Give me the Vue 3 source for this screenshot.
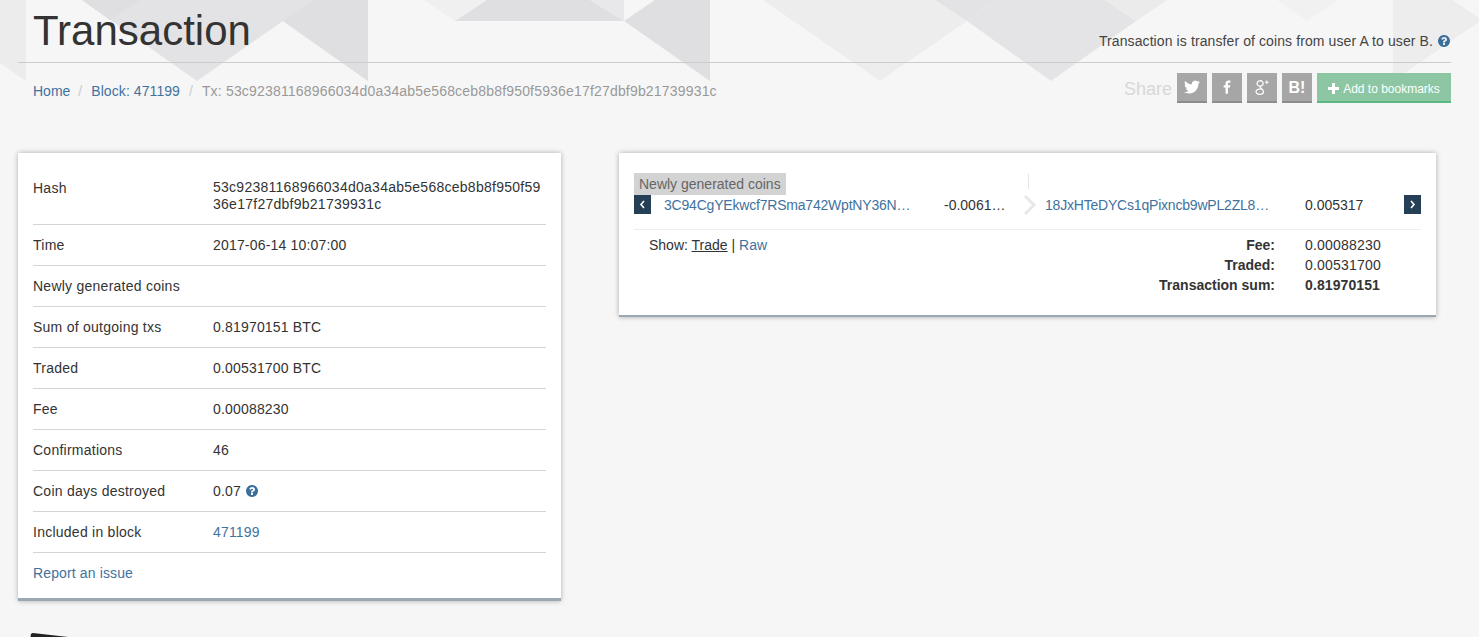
<script setup>
const rows = [
  { label: 'Time', value: '2017-06-14 10:07:00' },
  { label: 'Newly generated coins', value: '' },
  { label: 'Sum of outgoing txs', value: '0.81970151 BTC' },
  { label: 'Traded', value: '0.00531700 BTC' },
  { label: 'Fee', value: '0.00088230' },
  { label: 'Confirmations', value: '46' },
  { label: 'Coin days destroyed', value: '0.07', help: true },
  { label: 'Included in block', value: '471199', link: true }
]
const totals = [
  { label: 'Fee:', value: '0.00088230' },
  { label: 'Traded:', value: '0.00531700' },
  { label: 'Transaction sum:', value: '0.81970151', strong: true }
]
const helpPath = 'M1024 1376v-192q0-14-9-23t-23-9h-192q-14 0-23 9t-9 23v192q0 14 9 23t23 9h192q14 0 23-9t9-23zm256-672q0-88-55.5-163t-138.5-116-170-41q-243 0-371 213-15 24 8 42l132 100q7 6 19 6 16 0 25-12 53-68 86-92 34-24 86-24 48 0 85.5 26t37.5 59q0 38-20 61t-68 45q-63 28-115.5 86.5t-52.5 125.5v36q0 14 9 23t23 9h192q14 0 23-9t9-23q0-19 21.5-49.5t54.5-49.5q32-18 49-28.5t46-35 44.5-48 28-60.5 12.5-81zm384 192q0 209-103 385.5t-279.5 279.5-385.5 103-385.5-103-279.5-279.5-103-385.5 103-385.5 279.5-279.5 385.5-103 385.5 103 279.5 279.5 103 385.5z'
</script>

<template>
  <div class="page">
    <svg class="pattern" width="1479" height="81" viewBox="0 0 1479 81" aria-hidden="true">
      <polygon points="0,0 26,0 26,81 0,63" fill="#ececec" />
      <polygon points="82,0 197,81 283,21 368,81 368,0" fill="#e3e3e5" />
      <polygon points="82,0 110,20 140,0" fill="#dfdfe1" />
      <polygon points="283,21 315,0 368,0 368,81" fill="#dfdfe1" />
      <polygon points="424,0 455,21 487,0" fill="#f0f0f0" />
      <polygon points="455,21 487,0 590,0 624,21" fill="#dfdfe1" />
      <polygon points="590,0 624,0 624,21" fill="#e8e8ea" />
      <polygon points="624,21 655,0 710,0 710,81" fill="#dfdfe1" />
      <polygon points="763,0 880,81 967,21 935,0" fill="#ededed" />
      <polygon points="935,0 967,21 995,0" fill="#e3e3e5" />
      <polygon points="995,0 967,21 1051,81 1136,21 1105,0" fill="#e4e4e6" />
      <polygon points="1105,0 1136,21 1167,0" fill="#ebebec" />
      <polygon points="1277,0 1307,21 1338,0" fill="#f1f1f1" />
      <polygon points="1393,0 1453,0 1482,20 1393,81" fill="#ededed" />
    </svg>

    <header class="header">
      <div class="title-row">
        <h1 class="title">Transaction</h1>
        <p class="desc">
          Transaction is transfer of coins from user A to user B.
          <svg class="help" viewBox="0 0 1792 1792"><path :d="helpPath" /></svg>
        </p>
      </div>
      <div class="sub-row">
        <nav class="crumbs">
          <a class="link">Home</a><span class="sep">/</span>
          <a class="link block-link">Block: 471199</a><span class="sep">/</span>
          <span class="current">Tx: 53c92381168966034d0a34ab5e568ceb8b8f950f5936e17f27dbf9b21739931c</span>
        </nav>
        <div class="share">
          <span class="share-label">Share</span>
          <a class="sbtn">
            <svg width="16" height="16" viewBox="0 0 24 24" fill="#fff"><path d="M23.953 4.57a10 10 0 01-2.825.775 4.958 4.958 0 002.163-2.723c-.951.555-2.005.959-3.127 1.184a4.92 4.92 0 00-8.384 4.482C7.69 8.095 4.067 6.13 1.64 3.162a4.822 4.822 0 00-.666 2.475c0 1.71.87 3.213 2.188 4.096a4.904 4.904 0 01-2.228-.616v.06a4.923 4.923 0 003.946 4.827 4.996 4.996 0 01-2.212.085 4.936 4.936 0 004.604 3.417 9.867 9.867 0 01-6.102 2.105c-.39 0-.779-.023-1.17-.067a13.995 13.995 0 007.557 2.209c9.053 0 13.998-7.496 13.998-13.985 0-.21 0-.42-.015-.63A9.935 9.935 0 0024 4.59z" /></svg>
          </a>
          <a class="sbtn">
            <svg width="8" height="14" viewBox="0 0 10 17" fill="#fff"><path d="M9.2 3.1H7.6c-1.2 0-1.4.6-1.4 1.400V6.200h2.900l-.4 2.800H6.200v8H3.200V9H.8V6.200h2.400V4.100C3.200 1.700 4.700.3 6.900.3c1 0 1.900.1 2.300.1z" /></svg>
          </a>
          <a class="sbtn">
            <svg width="19" height="19" viewBox="0 0 20 20" fill="none" stroke="#fff" stroke-width="1.300"><path d="M9.300 2.800c-3-.5-5 .9-5 3 0 1.900 1.700 3.100 3.600 2.800 2-.3 3.200-1.900 2.700-3.600-.3-1.200-1.300-2-2.500-2.100" /><path d="M8 8.700c-.9 1-.3 1.500.8 2.400 1.400 1.100 2.500 1.900 2.300 3.500-.2 1.700-2 2.700-4.200 2.600-2.300-.1-3.900-1.300-3.700-2.900.2-1.600 2.200-2.700 5.300-2.800" /><path d="M14.500 2.500v4M12.500 4.500h4" stroke-width="1" /></svg>
          </a>
          <a class="sbtn hatena">B!</a>
          <a class="bookmark">
            <svg width="11" height="11" viewBox="0 0 11 11" fill="#fff"><path d="M4 0h3v4h4v3H7v4H4V7H0V4h4z" /></svg>
            Add to bookmarks
          </a>
        </div>
      </div>
    </header>

    <main class="content">
      <section class="card info">
        <div class="row hash-row">
          <span class="label">Hash</span>
          <span class="hash">53c92381168966034d0a34ab5e568ceb8b8f950f5936e17f27dbf9b21739931c</span>
        </div>
        <div v-for="r in rows" :key="r.label" class="row">
          <span class="label">{{ r.label }}</span>
          <span class="value">
            <a v-if="r.link" class="link">{{ r.value }}</a>
            <template v-else>{{ r.value }}</template>
            <svg v-if="r.help" class="help" viewBox="0 0 1792 1792"><path :d="helpPath" /></svg>
          </span>
        </div>
        <a class="link report">Report an issue</a>
      </section>

      <section class="card tx">
        <div class="tx-head">
          <div class="tx-head-left"><span class="tag">Newly generated coins</span></div>
          <div class="tx-head-right"></div>
        </div>
        <div class="tx-line">
          <button class="nav-btn">
            <svg width="7" height="9" viewBox="0 0 7 9" fill="none" stroke="#fff" stroke-width="1.600"><path d="M5 1 2 4.500 5 8" /></svg>
          </button>
          <a class="link addr addr-from">3C94CgYEkwcf7RSma742WptNY36NpUnGrH</a>
          <span class="amount amount-from">-0.00619930</span>
          <svg class="arrow" width="13" height="20" viewBox="0 0 13 20" fill="none" stroke="#e8e8e8" stroke-width="3"><path d="M2 1l9 9-9 9" /></svg>
          <a class="link addr addr-to">18JxHTeDYCs1qPixncb9wPL2ZL8nPaqFqJ</a>
          <span class="amount amount-to">0.005317</span>
          <button class="nav-btn">
            <svg width="7" height="9" viewBox="0 0 7 9" fill="none" stroke="#fff" stroke-width="1.600"><path d="M2 1l3 3.500L2 8" /></svg>
          </button>
        </div>
        <div class="tx-foot">
          <div class="show">Show: <a class="active">Trade</a> | <a class="link">Raw</a></div>
          <div class="totals">
            <div v-for="t in totals" :key="t.label" class="total" :class="{ strong: t.strong }">
              <span class="total-label">{{ t.label }}</span>
              <span class="total-value">{{ t.value }}</span>
            </div>
          </div>
        </div>
      </section>
    </main>

    <svg class="peek" width="50" height="5" viewBox="0 0 50 5" aria-hidden="true"><path d="M1 5C0 2 1 0 3 0l44 5z" fill="#222" /></svg>
  </div>
</template>

<style scoped>
.page {
  position: relative;
  width: 1479px;
  height: 637px;
  overflow: hidden;
  font-family: "Liberation Sans", Arial, sans-serif;
  font-size: 14px;
  line-height: 20px;
  color: #333;
}
.pattern {
  position: absolute;
  top: 0;
  left: 0;
}
.header {
  position: relative;
  padding: 0 28px 0 18px;
}
.title-row {
  display: flex;
  justify-content: space-between;
  align-items: flex-end;
  height: 62px;
  border-bottom: 1px solid #ccc;
  padding-left: 15px;
}
.title {
  margin: 0;
  font-size: 42px;
  font-weight: 400;
  line-height: 62px;
  color: #333;
}
.desc {
  margin: 0 0 11px;
  display: flex;
  align-items: center;
  gap: 4px;
  font-size: 14px;
  letter-spacing: 0.1px;
  color: #444;
}
.help {
  width: 14px;
  height: 14px;
  fill: #3a6f9c;
  flex: none;
}
.sub-row {
  display: flex;
  justify-content: space-between;
  padding: 10px 0 0 15px;
}
.crumbs {
  padding-top: 8px;
}
.link {
  color: #3f729e;
  text-decoration: none;
}
.block-link {
  letter-spacing: 0.08px;
}
.sep {
  color: #ccc;
  padding: 0 9px 0 8px;
}
.block-link + .sep {
  padding: 0 9px;
}
.current {
  color: #999;
  letter-spacing: 0.18px;
}
.share {
  display: flex;
  gap: 5px;
  align-items: stretch;
  height: 30px;
}
.share-label {
  font-size: 18px;
  line-height: 32px;
  color: #d8d8d8;
}
.sbtn {
  width: 30px;
  box-sizing: border-box;
  display: flex;
  align-items: center;
  justify-content: center;
  background: #a6a6a6;
  border-bottom: 2px solid #8c8c8c;
  color: #fff;
}
.hatena {
  font-size: 16px;
  line-height: 18px;
  padding-top: 1px;
  font-weight: 700;
}
.bookmark {
  width: 134px;
  box-sizing: border-box;
  display: flex;
  align-items: center;
  justify-content: center;
  gap: 4px;
  padding-top: 3px;
  background: #8cc6a3;
  border-bottom: 2px solid #5cb882;
  color: #fff;
  font-size: 12px;
}
.content {
  display: flex;
  align-items: flex-start;
  gap: 58px;
  padding: 50px 0 0 18px;
}
.card {
  box-sizing: border-box;
  background: #fff;
  border-bottom: 3px solid #9aa8b4;
  box-shadow: 0 0 5px rgba(0, 0, 0, 0.3);
}
.info {
  width: 543px;
  height: 448px;
  padding: 16px 15px 0;
}
.row {
  display: flex;
  padding: 10px 0;
  border-bottom: 1px solid #d5d5d5;
}
.hash-row {
  padding-bottom: 11px;
}
.hash-row .label {
  line-height: 18px;
}
.label {
  width: 180px;
  flex: none;
  letter-spacing: 0.25px;
}
.hash {
  width: 330px;
  line-height: 17px;
  letter-spacing: 0.26px;
  word-break: break-all;
}
.value {
  display: flex;
  align-items: center;
  gap: 4px;
  min-height: 20px;
  letter-spacing: 0.18px;
}
.report {
  display: block;
  padding-top: 10px;
  letter-spacing: 0.13px;
}
.tx {
  width: 817px;
  height: 164px;
  padding: 20px 15px 0;
  border-bottom-width: 2px;
}
.tx-head {
  display: flex;
  height: 22px;
}
.tx-head-left {
  width: 394px;
}
.tag {
  display: inline-block;
  padding: 1px 5px;
  background: #d3d3d3;
  color: #666;
}
.tx-head-right {
  height: 15px;
  margin-top: 1px;
  border-left: 1px solid #e5e5e5;
}
.tx-line {
  display: flex;
  align-items: center;
  height: 19px;
  padding-bottom: 15px;
  border-bottom: 1px solid #eee;
  box-sizing: content-box;
}
.nav-btn {
  width: 17px;
  height: 19px;
  flex: none;
  padding: 0;
  border: 0;
  display: flex;
  align-items: center;
  justify-content: center;
  background: #243f56;
}
.addr,
.amount {
  white-space: nowrap;
  overflow: hidden;
  text-overflow: ellipsis;
  flex: none;
}
.addr {
  letter-spacing: -0.2px;
}
.addr-from {
  width: 250px;
  margin-left: 13px;
}
.amount-from {
  width: 62px;
  margin-left: 30px;
}
.arrow {
  flex: none;
  margin-left: 17px;
}
.addr-to {
  width: 226px;
  margin-left: 9px;
}
.amount-to {
  width: 99px;
  margin-left: 34px;
}
.tx-foot {
  display: flex;
  padding-top: 5px;
}
.show {
  width: 391px;
  padding-left: 15px;
}
.active {
  text-decoration: underline;
  color: #333;
}
.totals {
  flex: 1;
}
.total {
  display: flex;
  color: #333;
}
.total-label {
  width: 235px;
  padding-right: 30px;
  box-sizing: content-box;
  text-align: right;
  font-weight: 700;
}
.total-value {
  flex: 1;
  letter-spacing: 0.2px;
}
.strong .total-value {
  font-weight: 700;
  letter-spacing: 0.1px;
}
.peek {
  display: block;
  margin: 32px 0 0 30px;
}
</style>

<style>
html,
body {
  margin: 0;
  background: #f6f6f6;
  overflow: hidden;
}
</style>
